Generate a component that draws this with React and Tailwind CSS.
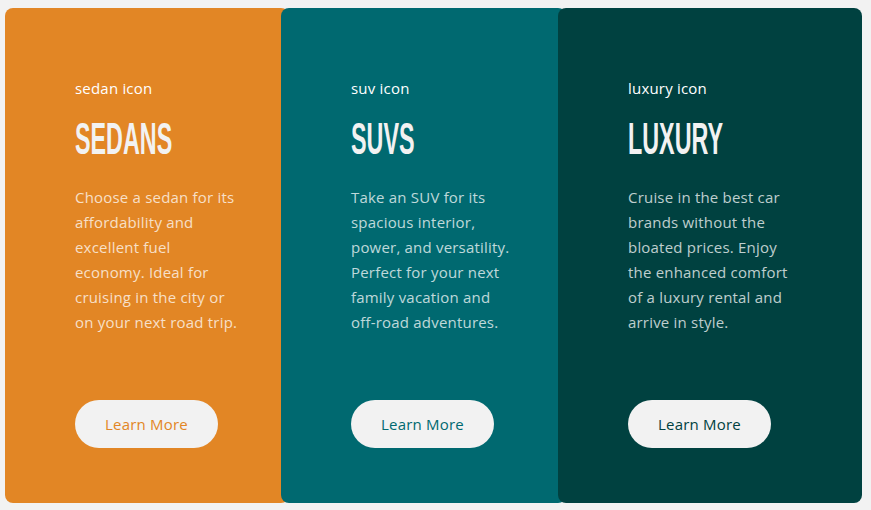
const cards = [
  {
    id: 'sedans',
    icon: 'sedan icon',
    title: 'SEDANS',
    lines: ['Choose a sedan for its', 'affordability and', 'excellent fuel', 'economy. Ideal for', 'cruising in the city or', 'on your next road trip.'],
    bg: 'bg-[#e28625]',
    text: 'text-[#e28625]',
    width: 'w-[284px]'
  },
  {
    id: 'suvs',
    icon: 'suv icon',
    title: 'SUVS',
    lines: ['Take an SUV for its', 'spacious interior,', 'power, and versatility.', 'Perfect for your next', 'family vacation and', 'off-road adventures.'],
    bg: 'bg-[#006970]',
    text: 'text-[#006970]',
    width: 'w-[285px] -ml-[8px]'
  },
  {
    id: 'luxury',
    icon: 'luxury icon',
    title: 'LUXURY',
    lines: ['Cruise in the best car', 'brands without the', 'bloated prices. Enjoy', 'the enhanced comfort', 'of a luxury rental and', 'arrive in style.'],
    bg: 'bg-[#004140]',
    text: 'text-[#004140]',
    width: 'w-[304px] -ml-[8px]'
  }
]

export default function App() {
  return (
    <div className="min-h-[510px] bg-[#f2f2f2] pl-[5px] pt-[8px] font-['Open_Sans',sans-serif]">
      <div className="flex">
        {cards.map(card => (
          <div
            key={card.id}
            className={`${card.bg} ${card.width} relative flex h-[495px] flex-col rounded-lg pl-[70px] pt-[70px] pb-[55px]`}
          >
            <p className="text-[15px] leading-[20px] font-medium tracking-[0.2px] text-white">{card.icon}</p>
            <h2 className="mt-[19px] h-[44px] whitespace-nowrap text-[44px] leading-[44px] font-bold text-[#f2f2f2] font-['Liberation_Sans',sans-serif]">
              <span className="inline-block origin-left scale-x-[0.53]">{card.title}</span>
            </h2>
            <p className="mt-[24px] text-[15px] leading-[25px] font-medium tracking-[0.2px] text-white/75">
              {card.lines.map((line, i) => (
                <span key={i} className="block whitespace-nowrap">{line}</span>
              ))}
            </p>
            <button
              className={`mt-auto flex h-[48px] w-[143px] items-center justify-center rounded-full bg-[#f2f2f2] text-[15px] font-medium tracking-[0.2px] ${card.text}`}
            >
              Learn More
            </button>
          </div>
        ))}
      </div>
    </div>
  )
}
